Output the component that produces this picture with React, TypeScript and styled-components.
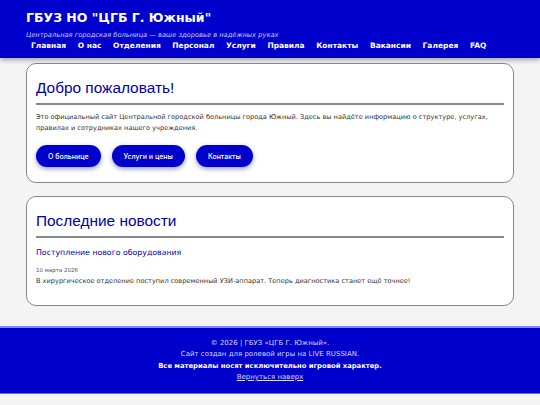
import { styled, createGlobalStyle } from "styled-components";

const navItems = [
  "Главная",
  "О нас",
  "Отделения",
  "Персонал",
  "Услуги",
  "Правила",
  "Контакты",
  "Вакансии",
  "Галерея",
  "FAQ",
];

const GlobalStyle = createGlobalStyle`
  * { box-sizing: border-box; }
  body {
    margin: 0;
    background: #f4f4f4;
    font-family: "DejaVu Sans", Verdana, sans-serif;
    color: #333;
  }
`;

export default function App() {
  return (
    <>
      <GlobalStyle />
      <Header>
        <SiteTitle>ГБУЗ НО "ЦГБ Г. Южный"</SiteTitle>
        <Tagline>Центральная городская больница — ваше здоровье в надёжных руках</Tagline>
        <Nav>
          {navItems.map((item) => (
            <NavLink key={item}>{item}</NavLink>
          ))}
        </Nav>
      </Header>

      <Main>
        <Card>
          <CardTitle>Добро пожаловать!</CardTitle>
          <Text>
            Это официальный сайт Центральной городской больницы города Южный. Здесь вы найдёте
            информацию о структуре, услугах, правилах и сотрудниках нашего учреждения.
          </Text>
          <Buttons>
            <PillButton>О больнице</PillButton>
            <PillButton>Услуги и цены</PillButton>
            <PillButton>Контакты</PillButton>
          </Buttons>
        </Card>

        <Card>
          <CardTitle>Последние новости</CardTitle>
          <NewsItem>
            <NewsTitle>Поступление нового оборудования</NewsTitle>
            <NewsDate>10 марта 2026</NewsDate>
            <NewsText>
              В хирургическое отделение поступил современный УЗИ-аппарат. Теперь диагностика
              станет ещё точнее!
            </NewsText>
          </NewsItem>
        </Card>
      </Main>

      <Footer>
        <FooterLine>© 2026 | ГБУЗ «ЦГБ Г. Южный».</FooterLine>
        <FooterLine>Сайт создан для ролевой игры на LIVE RUSSIAN.</FooterLine>
        <FooterLine $strong>Все материалы носят исключительно игровой характер.</FooterLine>
        <FooterLink href="#top">Вернуться наверх</FooterLink>
      </Footer>
    </>
  );
}

const Header = styled.header`
  background: #0000cc;
  color: #fff;
  padding: 10px 26px 7px;
  box-shadow: 0 2px 5px rgba(0, 0, 60, 0.35);
`;

const SiteTitle = styled.h1`
  margin: 0;
  font-size: 12.5px;
  font-weight: bold;
  line-height: 16px;
`;

const Tagline = styled.p`
  margin: 5px 0 0;
  font-size: 6.7px;
  font-style: italic;
  color: #c8c8ff;
  line-height: 8px;
`;

const Nav = styled.nav`
  display: flex;
  margin-top: 2px;
`;

const NavLink = styled.a`
  color: #fff;
  font-size: 7.5px;
  font-weight: bold;
  padding: 0 6.6px 0 5px;
  line-height: 10px;
  cursor: pointer;
`;

const Main = styled.main`
  padding: 5px 26px 20px;
  display: flex;
  flex-direction: column;
  gap: 13px;
`;

const Card = styled.section`
  background: #fff;
  border: 1px solid #888;
  border-radius: 10px;
  padding: 9px 9px 15px;
`;

const CardTitle = styled.h2`
  margin: 0;
  font-family: "Liberation Sans", Arial, sans-serif;
  font-weight: normal;
  font-size: 15.4px;
  line-height: 20px;
  color: #0000aa;
  padding: 5px 0 5px;
  border-bottom: 2px solid #888;
`;

const Text = styled.p`
  margin: 7px 0 0;
  font-size: 6.6px;
  line-height: 11px;
  color: #333;
`;

const Buttons = styled.div`
  display: flex;
  gap: 11px;
  margin-top: 11px;
`;

const PillButton = styled.button`
  background: #0000cc;
  color: #fff;
  border: none;
  border-radius: 12px;
  height: 22px;
  padding: 0 12px;
  font-family: "Inter", sans-serif;
  font-size: 7px;
  font-weight: 500;
  box-shadow: 0 2px 5px rgba(0, 0, 160, 0.4);
  cursor: pointer;
`;

const NewsItem = styled.article`
  padding-bottom: 3px;
`;

const NewsTitle = styled.h3`
  margin: 9px 0 0;
  font-size: 7.8px;
  font-weight: normal;
  color: #0000aa;
  line-height: 12px;
`;

const NewsDate = styled.div`
  margin-top: 8px;
  font-size: 5.5px;
  color: #555;
  line-height: 7px;
`;

const NewsText = styled.p`
  margin: 2px 0 0;
  font-size: 6.6px;
  line-height: 11px;
  color: #333;
`;

const Footer = styled.footer`
  background: #0000cc;
  border-top: 2px solid #8888ee;
  border-bottom: 1px solid #6666ee;
  padding: 10px 0 10px;
  display: flex;
  flex-direction: column;
  align-items: center;
`;

const FooterLine = styled.p<{ $strong?: boolean }>`
  margin: 0;
  line-height: 11.3px;
  color: ${(p) => (p.$strong ? "#fff" : "#d8d8ff")};
  font-weight: ${(p) => (p.$strong ? "bold" : "normal")};
  font-size: ${(p) => (p.$strong ? "6.8px" : "7px")};
`;

const FooterLink = styled.a`
  font-size: 7px;
  line-height: 11.3px;
  color: #d8d8ff;
  text-decoration: underline;
`;
